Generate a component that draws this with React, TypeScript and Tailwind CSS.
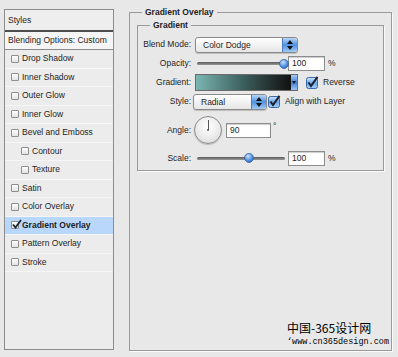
import React from 'react'

type StyleItem = {
  label: string
  indent?: boolean
  checked?: boolean
  selected?: boolean
}

const items: StyleItem[] = [
  { label: 'Drop Shadow' },
  { label: 'Inner Shadow' },
  { label: 'Outer Glow' },
  { label: 'Inner Glow' },
  { label: 'Bevel and Emboss' },
  { label: 'Contour', indent: true },
  { label: 'Texture', indent: true },
  { label: 'Satin' },
  { label: 'Color Overlay' },
  { label: 'Gradient Overlay', checked: true, selected: true },
  { label: 'Pattern Overlay' },
  { label: 'Stroke' },
]

function ListCheck({ checked }: { checked?: boolean }) {
  return (
    <span className="relative inline-block h-[8px] w-[8px] shrink-0 rounded-[1px] border border-[#8e8e8e] bg-gradient-to-b from-white to-[#e2e2e2]">
      {checked && (
        <svg className="absolute -top-[3px] left-[0px]" width="10" height="10" viewBox="0 0 10 10">
          <path d="M1 5.5 L3.5 8.5 L9 1" fill="none" stroke="#1c2433" strokeWidth="1.8" />
        </svg>
      )}
    </span>
  )
}

function AquaCheck() {
  return (
    <svg width="13" height="13" viewBox="0 0 13 13" className="shrink-0">
      <defs>
        <linearGradient id="aq" x1="0" y1="0" x2="0" y2="1">
          <stop offset="0" stopColor="#d4e7fb" />
          <stop offset="0.5" stopColor="#6aa6ea" />
          <stop offset="1" stopColor="#a8d0f6" />
        </linearGradient>
      </defs>
      <rect x="0.5" y="1.5" width="11" height="11" rx="2" fill="url(#aq)" stroke="#3b68aa" />
      <path d="M2.5 6.5 L5 10 L11.5 0.8" fill="none" stroke="#1b2230" strokeWidth="2" />
    </svg>
  )
}

function Stepper() {
  return (
    <span className="flex w-[15px] flex-col items-center justify-center gap-[2px] rounded-r-[2px] border-l border-[#4b7cc0] bg-gradient-to-b from-[#b7d6f7] via-[#4f90e0] to-[#a2cbf4]">
      <svg width="6" height="4" viewBox="0 0 6 4">
        <path d="M0 4 L3 0 L6 4 Z" fill="#111" />
      </svg>
      <svg width="6" height="4" viewBox="0 0 6 4">
        <path d="M0 0 L3 4 L6 0 Z" fill="#111" />
      </svg>
    </span>
  )
}

function AquaSelect({ value, className }: { value: string; className: string }) {
  return (
    <div
      className={`flex h-[16px] items-stretch overflow-hidden rounded-[3px] border border-[#8a8a8a] bg-gradient-to-b from-white to-[#e6e6e6] shadow-[0_1px_1px_rgba(0,0,0,0.18)] ${className}`}
    >
      <span className="flex-1 pl-[7px] leading-[14px]">{value}</span>
      <Stepper />
    </div>
  )
}

function SliderKnob() {
  return (
    <svg width="10" height="10" viewBox="0 0 10 10">
      <defs>
        <radialGradient id="kn" cx="0.4" cy="0.3" r="0.8">
          <stop offset="0" stopColor="#cfe4fb" />
          <stop offset="0.6" stopColor="#4d8fe0" />
          <stop offset="1" stopColor="#2a5fb0" />
        </radialGradient>
      </defs>
      <path d="M5 0.5 C8 0.5 9.5 2.5 9.5 5 C9.5 7 7.5 9.5 5 9.5 C2.5 9.5 0.5 7 0.5 5 C0.5 2.5 2 0.5 5 0.5 Z" fill="url(#kn)" stroke="#3a64a3" strokeWidth="0.8" />
    </svg>
  )
}

function Slider({ pos, className }: { pos: number; className: string }) {
  return (
    <div className={`relative flex h-[10px] items-center ${className}`}>
      <div className="h-[3px] w-full rounded-full bg-gradient-to-b from-[#5a5a5a] to-[#9a9a9a]" />
      <div className="absolute top-0" style={{ left: pos }}>
        <SliderKnob />
      </div>
    </div>
  )
}

function NumInput({ value }: { value: string }) {
  return (
    <div className="h-[15px] w-[37px] border border-[#8d8d8d] bg-white pl-[3px] leading-[13px] shadow-[inset_0_1px_1px_rgba(0,0,0,0.2)]">
      {value}
    </div>
  )
}

function Dial() {
  return (
    <div className="relative flex h-[28px] w-[28px] items-start justify-center rounded-full border border-[#8a8a8a] bg-[radial-gradient(circle_at_50%_35%,#ffffff,#e9e9e9_60%,#d4d4d4)] shadow-[0_1px_1px_rgba(0,0,0,0.2)]">
      <div className="mt-[3px] h-[10px] w-[1px] bg-[#555]" />
      <div className="absolute left-[12px] top-[12px] h-[2px] w-[2px] rounded-full bg-[#555]" />
    </div>
  )
}

export default function App() {
  return (
    <div className="relative flex h-[357px] w-[398px] overflow-hidden bg-[#e8e8e8] font-['Liberation_Sans',Arial,sans-serif] text-[8.5px] text-[#1e1e1e]">
      {/* styles list */}
      <div className="ml-[4px] mt-[9px] flex h-[341px] w-[110px] flex-col border border-[#8c8c8c] bg-[#ececec]">
        <div className="h-[22px] border-b-2 border-[#4e4e4e] bg-[#eeeeee] pl-[3px] leading-[20px]">Styles</div>
        <div className="h-[18px] border-b border-[#8a8a8a] bg-[#f5f5f5] pl-[3px] leading-[17px]">
          Blending Options: Custom
        </div>
        {items.map((it) => (
          <div
            key={it.label}
            className={`flex h-[18.5px] items-center gap-[3px] border-b border-[#f6f6f6] ${it.indent ? 'pl-[16px]' : 'pl-[6px]'} ${it.selected ? 'bg-[#b9d7fb] font-bold' : ''}`}
          >
            <ListCheck checked={it.checked} />
            <span>{it.label}</span>
          </div>
        ))}
      </div>

      {/* options */}
      <fieldset className="ml-[15px] mt-[6px] h-[345px] w-[263px] border border-[#9a9a9a] shadow-[1px_1px_0_#fafafa] px-[7px]">
        <legend className="ml-[5px] px-[3px] font-bold leading-[12px]">Gradient Overlay</legend>
        <fieldset className="mt-[1px] h-[152px] w-[247px] border border-[#9a9a9a] pt-[4px] shadow-[1px_1px_0_#fafafa]">
          <legend className="ml-[12px] px-[3px] font-bold leading-[12px]">Gradient</legend>
          <div className="flex h-[19px] items-center">
            <span className="w-[53px] text-right">Blend Mode:</span>
            <AquaSelect value="Color Dodge" className="ml-[4px] w-[103px]" />
          </div>
          <div className="flex h-[19px] items-center">
            <span className="w-[53px] text-right">Opacity:</span>
            <Slider pos={82} className="ml-[6px] w-[88px]" />
            <div className="ml-[3px]">
              <NumInput value="100" />
            </div>
            <span className="ml-[3px]">%</span>
          </div>
          <div className="flex h-[19px] items-center">
            <span className="w-[53px] text-right">Gradient:</span>
            <div className="ml-[4px] flex h-[17px] w-[103px] border border-[#6b6b6b]">
              <div className="flex-1 bg-gradient-to-r from-[#7bb6b2] via-[#3c5f5d] to-[#121212]" />
              <div className="flex w-[6px] items-center justify-center bg-gradient-to-b from-[#a8cdf5] via-[#3f7fd6] to-[#9ac5f2]">
                <svg width="4" height="3" viewBox="0 0 4 3">
                  <path d="M0 0 L2 3 L4 0 Z" fill="#111" />
                </svg>
              </div>
            </div>
            <div className="ml-[8px]">
              <AquaCheck />
            </div>
            <span className="ml-[4px]">Reverse</span>
          </div>
          <div className="flex h-[19px] items-center">
            <span className="w-[53px] text-right">Style:</span>
            <AquaSelect value="Radial" className="ml-[2px] w-[74px]" />
            <div className="ml-[1px]">
              <AquaCheck />
            </div>
            <span className="ml-[4px]">Align with Layer</span>
          </div>
          <div className="mt-[3px] flex h-[32px] items-center">
            <span className="w-[53px] text-right">Angle:</span>
            <div className="ml-[3px]">
              <Dial />
            </div>
            <div className="ml-[4px] h-[15px] w-[45px] border border-[#8d8d8d] bg-white pl-[3px] leading-[13px] shadow-[inset_0_1px_1px_rgba(0,0,0,0.2)]">
              90
            </div>
            <span className="ml-[2px] self-start pt-[6px]">°</span>
          </div>
          <div className="mt-[3px] flex h-[18px] items-center">
            <span className="w-[53px] text-right">Scale:</span>
            <Slider pos={47} className="ml-[6px] w-[88px]" />
            <div className="ml-[3px]">
              <NumInput value="100" />
            </div>
            <span className="ml-[3px]">%</span>
          </div>
        </fieldset>
      </fieldset>

      {/* watermark */}
      <div className="absolute left-[287px] top-[321px] leading-none text-black">
        <div className="font-['Noto_Sans_CJK_SC',sans-serif] text-[12px] leading-[14px]">中国-365设计网</div>
        <div className="mt-[2px] font-['Liberation_Mono',monospace] text-[8.5px] leading-[10px]">‘www.cn365design.com</div>
      </div>
    </div>
  )
}
